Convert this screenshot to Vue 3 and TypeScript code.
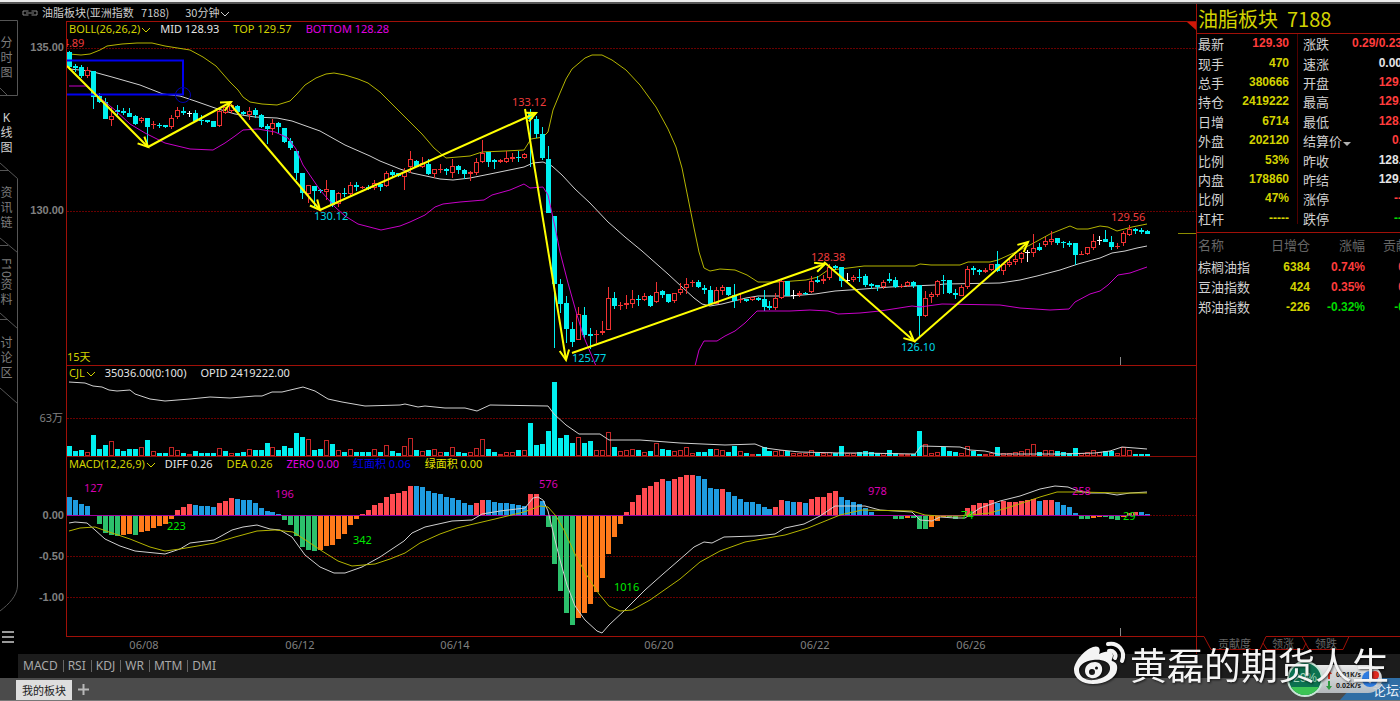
<script setup lang="ts">
type Kind = 'c' | 'r' | 'w'
interface Candle { kind: Kind; high: number; top: number; bottom: number; low: number }
interface Segment { base: number; rows: string }

const STEP = 5.988
const barX = (i: number): number => Math.round(66.9 + STEP * i)

/* Each row: kind high top bottom low, three ticks per pixel above the segment base.
   c = falling, r = rising, w = unchanged. */
const segments: Segment[] = [
  {
    base: 0,
    rows: `c 153 157 200 205;c 192 198 204 215;c 196 200 228 235;r 200 211 228 233;c 213 213 291 327;c 280 287 307 310;c 295 307 357 357;r 320 347 361 378;c 316 331 335 345;c 324 332 338 345;c 324 340 350 352;c 344 348 371 375;r 350 355 364 370;c 354 354 381 438;r 362 372 376 386;c 370 374 379 384;c 374 376 380 383;r 346 355 381 388;r 321 331 352 356;c 322 333 338 345;w 334 340 342 350;c 331 340 363 363;c 346 359 363 376;c 359 361 365 368;c 362 364 380 380;r 330 333 379 380;r 320 322 340 342;r 312 316 334 340;c 316 317 335 340;c 332 335 342 346;r 320 333 346 360;c 325 330 346 355;c 342 346 381 383;c 372 378 387 432;r 357 370 387 405;c 366 370 380 400;c 384 384 427 430;c 415 422 443 450;c 453 453 518 540;c 519 519 578 597;r 554 556 582 610;c 559 559 572 622;c 566 570 574 578;r 541 568 575 600;c 570 570 614 622;r 575 580 612 620;c 565 578 582 590;r 546 555 583 588;c 546 556 562 572;r 558 561 565 568;c 556 561 567 570;r 540 550 565 570;c 548 551 561 573;r 514 520 558 562;c 510 516 524 532;c 518 520 528 532;r 505 516 532 570;r 454 476 502 518;c 480 483 500 502;r 470 488 500 503;c 476 492 521 524;r 506 508 522 533;r 492 506 510 518;c 504 506 514 524;r 478 497 518 533;c 495 497 510 522;c 507 510 521 538;r 512 517 523 542;r 474 487 518 524;r 420 458 485 488;c 457 457 485 500;c 478 480 485 508;r 478 481 485 488;r 452 474 485 488;r 458 472 477 486;c 453 471 475 485;r 458 462 473 476;c 327 338 356 500;c 348 356 402 415;c 381 402 474 480;c 438 478 639 639`,
  },
  {
    base: 180,
    rows: `c 107 107 313 504;c 297 312 372 400;c 348 370 448 488;c 425 448 485 500;r 382 403 479 479;c 382 405 465 474;c 443 463 467 508;r 450 463 465 488;r 422 452 460 466;r 320 354 449 449;c 337 354 378 387;r 366 374 378 390;r 346 370 376 388;r 331 358 372 384;c 346 356 360 378;r 340 348 360 362;c 346 349 377 382;r 306 337 366 370;c 330 334 344 355;c 342 342 365 370;r 340 340 362 370;r 310 328 340 345;r 294 311 325 343;r 300 307 310 322;c 300 306 320 324;c 315 323 330 343;c 318 331 371 375;r 322 331 373 373;r 316 321 334 345;c 320 321 346 348;c 312 345 362 384;r 340 356 360 370;c 356 358 362 366;r 350 352 360 364;c 352 354 360 363;c 330 358 380 394;c 362 378 384 390;r 338 355 384 390;r 300 303 354 356;c 302 303 347 348;w 330 346 348 356;r 332 338 346 350;c 336 338 343 346;r 288 302 336 338;c 288 300 305 310;r 284 296 302 312;r 252 262 293 300;c 255 259 263 270;c 262 262 303 320;w 280 300 302 305;r 286 290 300 305;c 268 290 294 305;c 282 288 314 322;c 310 312 318 326;c 314 316 322 332;r 300 306 320 328;c 278 296 303 310`,
  },
  {
    base: 200,
    rows: `c 232 240 262 264;r 252 257 262 264;r 242 246 258 262;c 244 246 257 265;c 256 256 349 415;r 272 295 349 352;r 275 281 292 308;r 240 242 284 290;c 226 239 243 282;c 240 240 280 282;c 268 279 285 296;r 256 262 287 289;r 197 206 260 266;c 197 204 211 224;c 206 211 216 224;r 204 210 216 220;r 192 193 211 213;c 152 192 212 216;r 188 192 212 224;r 175 187 194 202;r 165 178 187 194;r 156 160 178 188;w 150 157 159 185;r 102 144 160 172;c 128 141 150 152;r 112 124 136 142;r 93 118 127 135;c 114 115 130 134;c 122 126 130 145;c 124 128 134 142;c 129 129 165 195;r 152 162 165 166;r 140 142 162 164;r 102 124 143 150;w 108 121 123 135;c 90 118 125 126;c 108 125 140 150;r 130 137 140 147;r 92 100 130 138;r 76 88 104 108;c 84 88 93 102;c 84 91 95 102;c 90 94 101 102`,
  },
]

const candles: Candle[] = segments.flatMap((s) =>
  s.rows.split(';').map((row) => {
    const [kind, ...v] = row.split(' ')
    const [high, top, bottom, low] = v.map((n) => s.base + Math.round(Number(n) / 3))
    return { kind: kind as Kind, high, top, bottom, low }
  }),
)

/* Volume heights, three ticks per pixel; a trailing r marks a rising bar. */
const volumes = `30 15 18 11r 64 22 34 46r 21 15 21 21 28r 48 14r 10 8 28r 18r 8 7r 15 10 10 10 23r 15 10r 10 12 20r 18 18 39 28r 17 30 24 69 57 50r 19 21 47r 36 19r 12 20r 12 12 12 20r 12 32r 15 9 29r 53r 18 14r 17 20r 11r 12 28r 12 9 11r 23r 50r 21 12 6r 11r 11r 18 17r 100 33 37 74 221 53 63 38 57r 38 44 19r 18r 72r 28 14r 17r 20r 19 11r 15 38r 20 17 14r 17r 28r 10r 12 12 21 20r 18r 13 30 14r 8 6r 6 28 16 14r 17r 16 8r 8r 10r 19r 9 8r 13r 8 29 8r 8r 11 16 13 10 8r 18 10 4r 5r 4 74 35r 8r 13r 27 15 11 9r 29r 15 6 7r 10r 27 10r 10r 11r 14r 20r 35r 12 18r 18r 14 11 9 25 8r 12r 17r 12r 14 15 10r 28r 18r 5 7 5`
  .split(' ')
  .map((t) => ({ up: t.endsWith('r'), h: Math.max(2, Math.round(parseInt(t) / 3)) }))

/* Histogram values, three ticks per pixel: b/r above zero, g/o below. */
const histogram = `b53 b45 b33 b27 b0 g-23 g-52 g-56 g-60 o-56 o-54 g-56 o-48 o-44 o-37 o-30 o-23 o-8 r16 r25 r33 b31 b28 b27 b24 r37 r43 r51 b49 b45 b44 b37 b22 b11 b8 b3 g-13 g-28 g-60 g-92 g-102 g-106 o-102 o-89 o-88 o-70 o-54 o-28 o-10 r3 r16 r29 r35 r54 r64 r67 r73 r88 b88 b85 b73 b67 b62 b54 b52 b45 b36 b31 r36 r46 b45 b40 b37 b36 b34 b29 b28 r63 r64 b41 g-34 g-145 g-226 g-292 g-328 o-305 o-292 o-265 o-228 o-187 o-115 o-64 o-25 r10 r40 r60 r82 r86 r98 r108 b103 r108 r113 r119 r121 b117 b107 b82 b79 r79 b70 b56 b47 b40 b38 b34 b24 b19 r25 r45 b42 b40 r40 b37 r49 r53 r55 r67 r72 b55 b45 b40 b34 b20 b8 b0 b1 b0 g-8 g-10 o-7 g-6 g-38 g-38 o-32 o-14 o-4 g-4 g-10 b0 r22 r31 r35 r37 r45 b37 r41 r40 r40 r43 r45 r47 b42 r44 r44 b40 b31 b24 b6 g-10 g-10 o-7 o-4 g-4 g-10 g-13 o-4 r6 r8 b8 b4`
  .split(' ')
  .map((t) => ({ tone: t[0], v: Math.round(parseInt(t.slice(1)) / 3) }))

const topLine = '69,54 81,55 90,54 100,50 107,46 122,44 137,43 152,43 165,46 190,50 203,57 216,66 230,82 238,90 243,97 250,102 262,104 277,105 290,101 297,94 305,85 316,78 326,74 334,73 345,75 358,79 368,83 380,92 400,112 412,124 422,134 434,148 446,158 470,156 482,152 505,151 524,150 531,139 543,137 548,132 553,110 560,93 566,79 572,69 585,58 592,55 602,55 612,60 626,70 640,85 656,107 668,129 676,147 682,168 688,198 694,228 699,252 704,268 710,271 720,269 735,270 747,275 758,282 780,282 806,280 818,277 828,270 840,269 864,266 900,266 915,266 920,264 931,265 944,265 960,265 968,262 990,262 998,260 1018,251 1030,245 1050,234 1070,226 1077,229 1088,229 1100,226 1108,227 1117,231 1132,227 1147,224'
const midLine = '69,69 90,71 112,77 140,85 163,94 180,96 195,101 215,108 235,114 255,117 277,118 292,121 320,131 345,145 370,156 380,161 400,169 412,173 440,179 453,180 470,178 490,174 524,167 533,163 543,162 552,166 562,175 575,189 590,203 608,222 625,237 642,251 668,274 682,287 694,298 702,304 710,306 722,304 746,298 758,296 790,296 815,294 835,291 864,289 890,287 912,286 935,285 945,284 1000,283 1020,280 1037,276 1060,270 1078,264 1100,258 1112,253 1125,251 1137,248 1147,246'
const bottomLines = [
  '69,86 86,86 100,98 115,110 130,124 145,133 165,143 190,149 213,150 225,143 235,136 243,130 258,129 275,132 288,138 296,149 303,165 320,190 335,207 345,216 358,224 381,230 400,226 410,222 425,215 435,207 443,204 460,202 484,200 492,195 510,190 524,184 530,188 543,187 548,195 555,227 560,252 568,283 575,308 583,335 596,366',
  '695,366 699,350 704,341 717,341 725,336 735,331 745,323 757,311 790,311 810,310 828,311 838,314 860,313 880,311 912,306 920,307 942,304 1000,305 1020,308 1050,310 1069,309 1075,302 1090,294 1100,291 1108,285 1118,275 1130,273 1147,267',
]
const openInterest = '69,382 85,383 93,386 102,387 109,390 117,391 130,390 135,394 150,399 165,401 190,399 210,397 230,398 255,396 262,396 272,392 282,392 303,387 315,391 328,399 342,402 365,406 400,405 405,404 418,407 425,406 445,408 465,408 477,411 490,405 548,406 554,414 566,425 579,434 600,434 609,440 640,440 680,443 725,445 755,444 765,448 780,450 800,452 840,453 860,453 915,454 921,446 960,447 970,450 985,451 998,454 1060,454 1095,453 1110,451 1122,447 1135,448 1147,449'
const diffLine = '69,523 75,522 87,523 95,530 105,539 120,546 135,551 165,554 180,549 190,543 214,540 232,530 243,527 257,525 270,529 280,530 292,537 305,555 320,567 334,573 345,573 362,567 380,557 404,541 412,533 425,527 452,521 472,520 482,514 500,511 525,508 533,498 538,497 543,500 548,511 554,536 560,560 567,585 575,606 585,620 597,631 602,633 609,625 625,610 645,590 663,574 678,561 694,547 704,542 712,543 724,537 755,536 775,534 785,528 804,524 820,516 835,506 865,506 880,510 912,512 920,520 932,521 940,517 955,518 965,518 980,508 1000,501 1020,496 1040,489 1055,486 1068,487 1078,491 1090,493 1105,493 1117,495 1130,493 1147,492'
const deaLine = '69,531 80,528 95,527 109,532 130,539 150,547 165,551 180,549 215,543 235,537 257,531 275,530 293,532 307,541 322,551 338,561 352,566 375,564 390,559 405,553 420,543 440,534 457,528 478,523 495,519 524,512 540,506 548,507 556,516 564,530 575,554 586,574 599,594 609,606 620,611 632,610 650,600 680,579 700,562 720,551 745,542 785,535 808,528 840,515 862,510 912,511 925,515 940,516 960,516 990,513 1010,507 1040,497 1057,492 1080,492 1120,493 1147,493'

const arrows: number[][] = [
  [67, 66, 148, 147], [148, 147, 231, 102], [231, 105, 320, 210], [320, 210, 536, 113],
  [525, 109, 566, 360], [572, 353, 825, 264], [824, 262, 914, 341], [914, 342, 1028, 242],
]
const head = ([x1, y1, x2, y2]: number[]): string => {
  const a = Math.atan2(y2 - y1, x2 - x1)
  const p = (d: number) => `${(x2 - 11 * Math.cos(a + d)).toFixed(1)},${(y2 - 11 * Math.sin(a + d)).toFixed(1)}`
  return `${p(0.45)} ${x2},${y2} ${p(-0.45)}`
}

const priceTags = [
  { x: 50, y: 47, t: '134.89', c: 'hi' }, { x: 512, y: 106, t: '133.12', c: 'hi' },
  { x: 314, y: 220, t: '130.12', c: 'lo' }, { x: 572, y: 362, t: '125.77', c: 'lo' },
  { x: 811, y: 261, t: '128.38', c: 'hi' }, { x: 901, y: 351, t: '126.10', c: 'lo' },
  { x: 1111, y: 221, t: '129.56', c: 'hi' }, { x: 67, y: 361, t: '15天', c: 'days' },
]
const areaTags = [
  { x: 84, y: 492, t: '127', c: 'pos' }, { x: 275, y: 498, t: '196', c: 'pos' },
  { x: 539, y: 488, t: '576', c: 'pos' }, { x: 868, y: 495, t: '978', c: 'pos' },
  { x: 1072, y: 495, t: '258', c: 'pos' }, { x: 167, y: 530, t: '223', c: 'neg' },
  { x: 353, y: 544, t: '342', c: 'neg' }, { x: 614, y: 591, t: '1016', c: 'neg' },
  { x: 961, y: 519, t: '74', c: 'neg' }, { x: 1123, y: 520, t: '29', c: 'neg' },
]
const dates = [
  { x: 144, t: '06/08' }, { x: 300, t: '06/12' }, { x: 455, t: '06/14' },
  { x: 659, t: '06/20' }, { x: 815, t: '06/22' }, { x: 971, t: '06/26' },
]

const sideTabs = [
  { name: '分时图', parts: ['分', '时', '图'] },
  { name: 'K线图', parts: ['K', '线', '图'] },
  { name: '资讯链', parts: ['资', '讯', '链'] },
  { name: 'F10资料', parts: ['F10', '资', '料'] },
  { name: '讨论区', parts: ['讨', '论', '区'] },
]

const quotes = [
  ['最新', '129.30', 'red', '涨跌', '0.29/0.23', 'red'],
  ['现手', '470', 'yel', '速涨', '0.00', 'wht'],
  ['总手', '380666', 'yel', '开盘', '129.', 'red'],
  ['持仓', '2419222', 'yel', '最高', '129.', 'red'],
  ['日增', '6714', 'yel', '最低', '128.', 'red'],
  ['外盘', '202120', 'yel', '结算价', '0.', 'red'],
  ['比例', '53%', 'yel', '昨收', '128.', 'wht'],
  ['内盘', '178860', 'yel', '昨结', '129.', 'wht'],
  ['比例', '47%', 'yel', '涨停', '--', 'red'],
  ['杠杆', '-----', 'yel', '跌停', '--', 'grn'],
]
const members = [
  ['棕榈油指', '6384', '0.74%', '0', 'red'],
  ['豆油指数', '424', '0.35%', '0', 'red'],
  ['郑油指数', '-226', '-0.32%', '-0', 'grn'],
]
const indicators = ['MACD', 'RSI', 'KDJ', 'WR', 'MTM', 'DMI']
</script>

<template>
  <div class="app">
    <div class="edge"></div>
    <div class="body">
      <nav class="side">
        <svg class="side-lines" width="18" height="616" viewBox="0 20 18 616">
          <path d="M0 20.500H17.500V95.500H0M0 88L7 95M0 163L17.500 178.500V586C17 596 9 604 0 611M0 170.500H8M0 238L17.500 252.500M0 245.500H8M0 313L17.500 328.500M0 319.500H8M0 388L17.500 403.500" />
        </svg>
        <button v-for="(tab, i) in sideTabs" :key="tab.name" class="side-tab" :class="{ active: i === 1 }">
          <span v-for="p in tab.parts" :key="p" :class="{ turned: p.length > 1 }">{{ p }}</span>
        </button>
        <button class="menu" aria-label="菜单">
          <svg width="13" height="14" viewBox="0 0 13 14"><path d="M0 2H12M0 7H12M0 12H12" /></svg>
        </button>
      </nav>

      <main class="center">
        <header class="title">
          <svg width="16" height="6" viewBox="0 0 16 6"><path d="M6.500 1H1V5H6.500M9.500 1H15V5H9.500M4 3H12" /></svg>
          <span class="name">油脂板块(亚洲指数&nbsp;&nbsp; 7188)</span>
          <button class="pick">30分钟<svg width="10" height="6" viewBox="0 0 10 6"><path d="M1 1L5 5L9 1" /></svg></button>
        </header>

        <section class="pane price">
          <svg class="axis"><text x="46" y="30">135.00</text><text x="46" y="193">130.00</text></svg>
          <div class="plot">
            <div class="legend">
              <button class="yel">BOLL(26,26,2)<svg width="10" height="6" viewBox="0 0 10 6"><path d="M1 1L5 5L9 1" /></svg></button>
              <span class="wht">MID 128.93</span><span class="yel">TOP 129.57</span><span class="mag">BOTTOM 128.28</span>
            </div>
            <svg class="draw">
              <line class="grid" x1="0" x2="100%" y1="26.500" y2="26.500" />
              <line class="grid" x1="0" x2="100%" y1="189.500" y2="189.500" />
              <g transform="translate(-67 -22)">
                <polyline class="l-yel" :points="topLine" />
                <polyline class="l-wht" :points="midLine" />
                <g v-for="(c, i) in candles" :key="i" :class="['k', c.kind]">
                  <rect v-if="c.top > c.high" :x="barX(i) + 2" :y="c.high" width="1" :height="c.top - c.high" />
                  <rect v-if="c.low > c.bottom" :x="barX(i) + 2" :y="c.bottom" width="1" :height="c.low - c.bottom" />
                  <rect v-if="c.kind === 'r' && c.bottom - c.top > 1" class="hollow" :x="barX(i) + 0.5" :y="c.top + 0.5" width="4" :height="c.bottom - c.top - 1" />
                  <rect v-else :x="barX(i)" :y="c.top" width="5" :height="Math.max(1, c.bottom - c.top)" />
                </g>
                <polyline v-for="b in bottomLines" :key="b" class="l-mag" :points="b" />
                <g class="box"><path d="M67 60.500H183V94.500H67" /><circle cx="183" cy="95" r="7.500" /></g>
                <text v-for="p in priceTags" :key="p.t" :x="p.x" :y="p.y" :class="p.c">{{ p.t }}</text>
                <g v-for="(a, i) in arrows" :key="i" class="arrow">
                  <line :x1="a[0]" :y1="a[1]" :x2="a[2]" :y2="a[3]" /><polyline :points="head(a)" />
                </g>
                <path class="tick" d="M1120.500 357V365" />
                <path class="last" d="M1178 233.500H1196" />
                <path class="corner" d="M1187 22H1197V31Z" />
              </g>
            </svg>
          </div>
        </section>

        <section class="pane volume">
          <svg class="axis"><text class="wan" x="45" y="56">63万</text></svg>
          <div class="plot">
            <div class="legend">
              <button class="yel">CJL<svg width="10" height="6" viewBox="0 0 10 6"><path d="M1 1L5 5L9 1" /></svg></button>
              <span class="wht">35036.00(0:100)</span><span class="wht">OPID 2419222.00</span>
            </div>
            <svg class="draw">
              <line class="grid" x1="0" x2="100%" y1="52.500" y2="52.500" />
              <g transform="translate(-67 -366)">
                <g v-for="(v, i) in volumes" :key="i" class="k" :class="v.up ? 'r dim' : 'c'">
                  <rect v-if="v.up" class="hollow" :x="barX(i) + 0.5" :y="456.5 - v.h" width="4" :height="v.h - 1" />
                  <rect v-else :x="barX(i)" :y="456 - v.h" width="5" :height="v.h" />
                </g>
                <polyline class="l-wht" :points="openInterest" />
              </g>
            </svg>
          </div>
        </section>

        <section class="pane macd">
          <svg class="axis"><text x="46" y="62">0.00</text><text x="46" y="103">-0.50</text><text x="46" y="144">-1.00</text></svg>
          <div class="plot">
            <div class="legend">
              <button class="yel">MACD(12,26,9)<svg width="10" height="6" viewBox="0 0 10 6"><path d="M1 1L5 5L9 1" /></svg></button>
              <span class="wht">DIFF 0.26</span><span class="yel">DEA 0.26</span><span class="mag">ZERO 0.00</span>
              <span class="blu">红面积 0.06</span><span class="lime">绿面积 0.00</span>
            </div>
            <svg class="draw">
              <line class="grid" x1="0" x2="100%" y1="58.500" y2="58.500" />
              <line class="grid" x1="0" x2="100%" y1="99.500" y2="99.500" />
              <line class="grid" x1="0" x2="100%" y1="140.500" y2="140.500" />
              <g transform="translate(-67 -457)">
                <rect v-for="(h, i) in histogram" :key="i" :class="['h', h.tone]" :x="barX(i)" :y="h.v > 0 ? 515 - h.v : 516" width="5" :height="Math.abs(h.v)" />
                <path class="zero" d="M67 515.500H1150" />
                <polyline class="l-wht" :points="diffLine" />
                <polyline class="l-yel" :points="deaLine" />
                <text v-for="a in areaTags" :key="a.t" :x="a.x" :y="a.y" :class="a.c">{{ a.t }}</text>
                <path class="tick" d="M1120.500 628V636" />
              </g>
            </svg>
          </div>
        </section>

        <svg class="dates"><text v-for="d in dates" :key="d.t" :x="d.x - 18" y="12">{{ d.t }}</text></svg>
      </main>

      <aside class="quote">
        <h1>油脂板块&nbsp; 7188</h1>
        <div class="pairs">
          <div v-for="(q, i) in quotes" :key="i" class="pair">
            <span class="lab">{{ q[0] }}</span><b :class="q[2]">{{ q[1] }}</b>
            <span class="lab second">{{ q[3] }}<i v-if="q[3] === '结算价'" class="drop"></i></span><b :class="q[5]">{{ q[4] }}</b>
          </div>
        </div>
        <table>
          <thead><tr><th>名称</th><th>日增仓</th><th>涨幅</th><th>贡献</th></tr></thead>
          <tbody>
            <tr v-for="m in members" :key="m[0]">
              <td>{{ m[0] }}</td><td class="yel">{{ m[1] }}</td><td :class="m[4]">{{ m[2] }}</td><td :class="m[4]">{{ m[3] }}</td>
            </tr>
          </tbody>
        </table>
        <div class="rank">
          <svg width="204" height="16" viewBox="1196 635 204 16">
            <path d="M1196 636.500H1204L1211 649.500H1260L1266 636.500H1400M1263 643L1267 649.500H1303L1306 643M1302 636.500L1309 649.500H1343L1349 636.500" />
          </svg>
          <button>贡献度</button><button>领涨</button><button>领跌</button>
        </div>
      </aside>
    </div>

    <div class="indicators">
      <button v-for="n in indicators" :key="n">{{ n }}</button>
    </div>
    <footer class="boards">
      <button class="board">我的板块</button>
      <button class="add" aria-label="添加"><svg width="11" height="11" viewBox="0 0 11 11"><path d="M5.500 0V11M0 5.500H11" /></svg></button>
      <a class="forum" href="#">论坛找</a>
    </footer>

    <div class="speed">
      <svg width="90" height="40" viewBox="1284 658 90 40">
        <defs>
          <linearGradient id="pill" x1="0" y1="0" x2="0" y2="1"><stop offset="0" stop-color="#fff" /><stop offset="1" stop-color="#bfc4c8" /></linearGradient>
          <clipPath id="ball"><circle cx="1305" cy="679" r="16" /></clipPath>
        </defs>
        <rect x="1304" y="665" width="78" height="28" rx="14" fill="url(#pill)" opacity="0.9" />
        <circle cx="1305" cy="679" r="17" fill="#0c7250" stroke="#c8e4d6" stroke-width="2" />
        <rect x="1286" y="687" width="40" height="12" fill="#3cc455" clip-path="url(#ball)" />
        <text x="1305" y="682" class="pct">29%</text>
        <path d="M1328 679V674H1326L1329 670L1332 674H1330V679Z" fill="#e03020" />
        <path d="M1328 681V686H1326L1329 690L1332 686H1330V681Z" fill="#2f9b40" />
        <text x="1336" y="677" class="rate">0.01K/s</text>
        <text x="1336" y="688" class="rate">0.02K/s</text>
        <circle cx="1370" cy="679" r="8" fill="#2d7be0" />
        <path d="M1367 679.500L1370 682L1374 677" fill="none" stroke="#fff" stroke-width="2" />
        <circle cx="1375" cy="675" r="4" fill="#e02a20" />
      </svg>
    </div>
    <div class="mark">
      <svg width="54" height="44" viewBox="0 0 54 44">
        <path fill="#f4f4f4" fill-rule="evenodd" d="M1 28C1 20 11 8 20 5C26 3 28 7 26 12C32 9 39 8 40 13C40 16 38 18 39 19C43 20 45 23 44 28C43 36 32 42 20 42C9 42 1 36 1 28ZM6 28C6 35 13 39 21 38C30 37 38 32 37 25C36 19 28 17 20 18C12 19 6 23 6 28Z" />
        <path fill="#f4f4f4" fill-rule="evenodd" d="M12 29C12 23 17 20 22 20C27 20 30 24 29 29C28 34 23 37 18 36C14 35 12 32 12 29ZM16 30A3 3 0 1 0 22 30A3 3 0 1 0 16 30ZM22 26A1.500 1.500 0 1 0 25 26A1.500 1.500 0 1 0 22 26Z" />
        <path fill="none" stroke="#f4f4f4" stroke-width="4" stroke-linecap="round" d="M35 2C45 0 53 9 49 19M36 9C40 8 44 12 42 16" />
      </svg>
      <span>黄磊的期货人生</span>
    </div>
  </div>
</template>

<style>
html, body { background: #000; overflow: hidden; }
</style>

<style scoped>
.app {
  position: relative;
  min-height: 100vh;
  overflow: hidden;
  display: flex;
  flex-direction: column;
  background: #000;
  color: #ddd;
  font: 11px/15px "Noto Sans", "Noto Sans CJK SC", sans-serif;
}
button { background: none; border: 0; padding: 0; margin: 0; font: inherit; color: inherit; white-space: nowrap; }
.edge { height: 2px; background: #ececec; border-bottom: 2px solid #555; }
.body { display: flex; flex: 1; min-height: 0; }

.side { position: relative; width: 18px; flex: none; display: flex; flex-direction: column; padding-top: 16px; color: #7c7c7c; }
.side-lines { position: absolute; left: 0; top: 16px; }
.side-lines path { fill: none; stroke: #555; }
.side-tab { position: relative; width: 13px; height: 75px; display: flex; flex-direction: column; align-items: center; justify-content: center; font-size: 12px; line-height: 15px; }
.side-tab.active { color: #d0d0d0; }
.turned { writing-mode: vertical-rl; line-height: 13px; }
.menu { margin-top: auto; margin-bottom: 10px; height: 14px; padding-left: 2px; text-align: left; }
.menu svg { display: block; }
.menu path { stroke: #999; stroke-width: 2; }

.center { flex: 1; min-width: 0; display: flex; flex-direction: column; }
.title { height: 17px; display: flex; align-items: center; gap: 4px; padding-left: 4px; font-family: "Noto Sans CJK SC", sans-serif; color: #ccc; }
.title path, .pick path { fill: none; stroke: currentColor; }
.title > svg { color: #888; }
.pick { margin-left: 12px; }
.pick svg { margin-left: 1px; }
.pane { display: grid; grid-template-columns: 48px 1fr; }
.plot { position: relative; border-left: 1px solid #a01008; border-bottom: 1px solid #a01008; min-width: 0; }
.price .plot { border-top: 1px solid #a01008; height: 343px; }
.volume .plot { height: 90px; border-bottom-color: #8a0c06; }
.macd .plot { height: 179px; }
.axis { width: 48px; height: 0; min-height: 100%; }
.axis text { fill: #808080; font: bold 11px "Liberation Sans", sans-serif; text-anchor: end; }
.axis .wan { font: 11px "Noto Sans", "Noto Sans CJK SC", sans-serif; }
.draw { display: block; width: 100%; height: 100%; overflow: hidden; }
.legend { position: absolute; left: 2px; top: 0; display: flex; gap: 14px; line-height: 14px; white-space: nowrap; z-index: 1; }
.legend button { margin-right: -5px; }
.legend svg { margin-left: 1px; }
.legend path { fill: none; stroke: currentColor; }
.yel { color: #d2d200; }
.wht { color: #e4e4e4; }
.mag { color: #e000e0; }
.blu { color: #0000e8; }
.lime { color: #e0e000; }
.red { color: #ff3c3c; }
.grn { color: #00d800; }

.grid { stroke: #680000; stroke-dasharray: 2 1; }
polyline { fill: none; }
.l-yel { stroke: #b4b400; }
.l-wht { stroke: #d0d0d0; }
.l-mag { stroke: #c800c8; }
.k { shape-rendering: crispEdges; }
.c { fill: #00f0f0; }
.r { fill: #f03232; }
.w { fill: #fff; }
.hollow { fill: #000; stroke: #f03232; }
.dim .hollow { stroke: #c42626; }
.box { fill: none; stroke: #0000f0; stroke-width: 2; }
.box circle { stroke: #0000b0; stroke-width: 1; }
.hi { fill: #f03c3c; }
.lo { fill: #00d8e8; }
.days { fill: #d2d200; }
.pos { fill: #d800b0; }
.neg { fill: #00e800; }
.arrow { stroke: #ffff00; stroke-width: 2; fill: none; }
.tick { stroke: #888; }
.last { stroke: #8c8c00; }
.corner { fill: #d01808; }
.zero { stroke: #a000a0; }
.h { shape-rendering: crispEdges; }
.h.b { fill: #1e9be0; }
.h.r { fill: #ff4a50; }
.h.g { fill: #2cc06c; }
.h.o { fill: #ff7a1a; }
.dates { width: 100%; height: 17px; }
.dates text { fill: #808080; text-anchor: middle; }

.quote { box-sizing: border-box; width: 204px; flex: none; border-left: 1px solid #a01008; overflow: hidden; display: flex; flex-direction: column; }
h1 { margin: 0; height: 29px; padding-left: 1px; border-bottom: 1px solid #a01008; color: #d2d200; font: 20px/30px "Noto Sans CJK SC", sans-serif; white-space: nowrap; }
.pairs { height: 194px; display: grid; grid-template-rows: repeat(10, 1fr); padding-bottom: 4px; border-bottom: 1px solid #a01008; background: linear-gradient(#500000, #500000) no-repeat 100px 0 / 1px 190px; }
.pair { display: grid; grid-template-columns: 40px 51px minmax(0, 1fr) 60px; align-items: center; margin-right: -2px; padding-left: 1px; }
.lab { font: 13px/17px "Noto Sans CJK SC", sans-serif; color: #d0d0d0; white-space: nowrap; }
.second { padding-left: 14px; }
.pair b { font: bold 12px/19px "Liberation Sans", sans-serif; text-align: right; white-space: nowrap; }
.drop { display: inline-block; border: 4px solid transparent; border-top-color: #b0b0b0; border-bottom: 0; margin-left: 1px; }
table { table-layout: fixed; width: 208px; border-collapse: collapse; }
th, td { padding: 0; height: 20px; text-align: right; white-space: nowrap; font: bold 12px/19px "Liberation Sans", sans-serif; }
th { height: 24px; color: #666; font: 13px/18px "Noto Sans CJK SC", sans-serif; }
th:first-child, td:first-child { width: 60px; padding-left: 1px; text-align: left; }
td:first-child { font: 13px/18px "Noto Sans CJK SC", sans-serif; color: #d0d0d0; }
th:nth-child(2) { width: 52px; }
th:nth-child(3) { width: 55px; }
th:nth-child(4) { text-align: left; padding-left: 18px; }
.rank { position: relative; margin-top: auto; margin-bottom: 3px; margin-left: -1px; height: 16px; display: flex; gap: 21px; padding-left: 22px; color: #666; font: 11px/15px "Noto Sans CJK SC", sans-serif; }
.rank svg { position: absolute; left: 0; top: 0; }
.rank path { fill: none; stroke: #a01008; }

.indicators { height: 24px; margin-left: 18px; background: #1c1c1c; display: flex; align-items: center; padding-left: 5px; font-size: 12px; color: #a8a8a8; line-height: 12px; }
.indicators button + button { margin-left: 5px; padding-left: 4px; border-left: 1px solid #666; }
.boards { height: 22px; background: #4b4b4b; border-bottom: 1px solid #777; display: flex; align-items: center; padding-left: 16px; gap: 6px; overflow: hidden; }
.board { align-self: stretch; margin-top: 2px; width: 56px; background: #dedede; color: #222; font-family: "Noto Sans CJK SC", sans-serif; }
.add svg { display: block; }
.add path { stroke: #b8b8b8; stroke-width: 2; }
.forum { align-self: stretch; margin-left: auto; width: 27px; padding-left: 33px; overflow: hidden; white-space: nowrap; background: #2f6ea5; clip-path: polygon(20px 0, 100% 0, 100% 100%, 0 100%); color: #e8f0f8; text-decoration: none; font: 13px/24px "Noto Sans CJK SC", sans-serif; }

.speed { position: absolute; right: 26px; bottom: 3px; }
.speed svg, .mark svg { display: block; overflow: visible; }
.pct { fill: #9fd8bd; font: 12px "Liberation Sans", sans-serif; text-anchor: middle; }
.rate { fill: #222; font: bold 7px "Noto Sans", sans-serif; }
.mark { position: absolute; right: 11px; bottom: 15px; display: flex; align-items: center; gap: 3px; color: #f4f4f4; font: 37px/44px "Noto Sans CJK SC", sans-serif; white-space: nowrap; filter: drop-shadow(1px 1px 1px #000a); }
</style>
